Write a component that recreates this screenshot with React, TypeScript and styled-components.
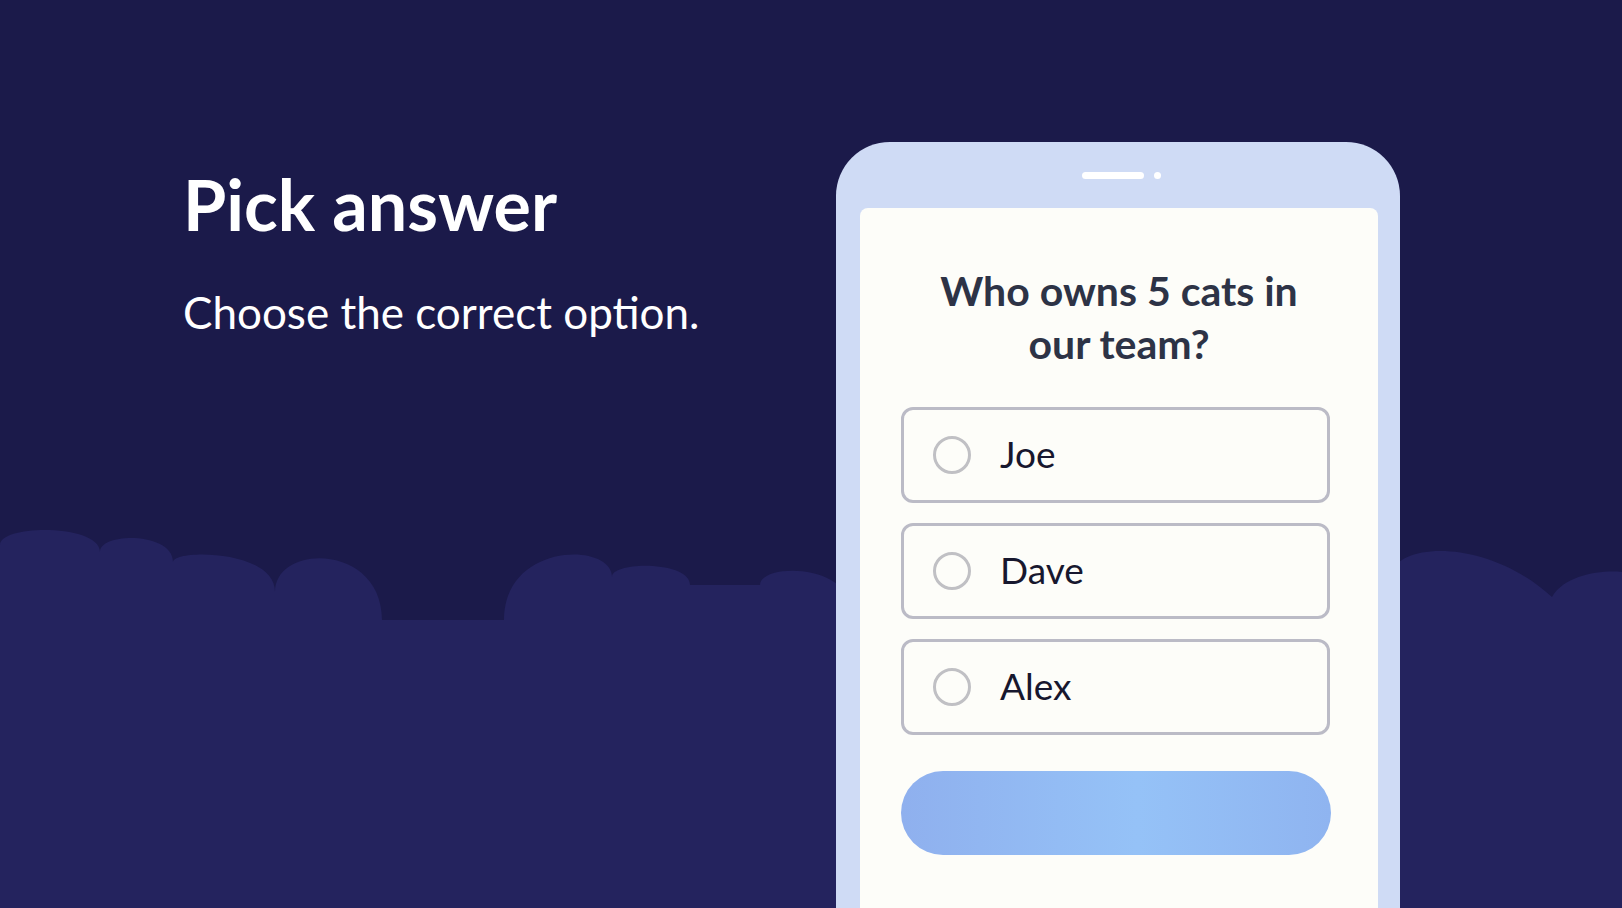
import React from 'react';
import styled, { createGlobalStyle } from 'styled-components';

const GlobalStyle = createGlobalStyle`
  html, body {
    margin: 0;
    padding: 0;
    background: #1b1a4a;
    overflow: hidden;
  }
  * {
    box-sizing: border-box;
  }
`;

const Page = styled.main`
  position: relative;
  width: 100%;
  height: 908px;
  overflow: hidden;
  display: flex;
  align-items: flex-start;
  padding-left: 183px;
  font-family: Lato, 'Open Sans', sans-serif;
  background: #1b1a4a;
`;

const Clouds = styled.svg`
  position: absolute;
  inset: 0;
  width: 100%;
  height: 100%;
  z-index: 0;
`;

const Intro = styled.section`
  position: relative;
  z-index: 1;
  flex: 0 0 653px;
  padding-top: 162px;
  color: #ffffff;
`;

const Title = styled.h1`
  margin: 0;
  font-size: 70px;
  line-height: 1.2;
  font-weight: 700;
`;

const Subtitle = styled.p`
  margin: 40px 0 0;
  font-size: 44px;
  line-height: 1.2;
  font-weight: 400;
`;

const Phone = styled.div`
  position: relative;
  z-index: 1;
  flex: 0 0 564px;
  height: 820px;
  margin-top: 142px;
  padding: 30px 22px 0 24px;
  background: #cfdbf5;
  border-radius: 54px 54px 0 0;
  display: flex;
  flex-direction: column;
`;

const Speaker = styled.div`
  display: flex;
  align-items: center;
  justify-content: center;
  gap: 10px;
  height: 7px;
  margin-bottom: 29px;
  padding-left: 4px;
`;

const SpeakerBar = styled.span`
  width: 62px;
  height: 7px;
  border-radius: 4px;
  background: #ffffff;
`;

const SpeakerDot = styled.span`
  width: 7px;
  height: 7px;
  border-radius: 50%;
  background: #ffffff;
`;

const Screen = styled.div`
  flex: 1;
  background: #fdfdf9;
  border-radius: 8px 8px 0 0;
  padding: 56px 0 0 41px;
`;

const Question = styled.h2`
  margin: 0 0 37px -41px;
  font-size: 41px;
  line-height: 53px;
  font-weight: 700;
  color: #2d3346;
  text-align: center;
  padding: 0 69px;
`;

const Options = styled.div`
  width: 429px;
  display: flex;
  flex-direction: column;
  gap: 20px;
`;

const Option = styled.label`
  height: 96px;
  border: 3px solid #bbbbc6;
  border-radius: 12px;
  display: flex;
  align-items: center;
  gap: 29px;
  padding-left: 29px;
  cursor: pointer;
`;

const Radio = styled.span`
  width: 38px;
  height: 38px;
  border-radius: 50%;
  border: 3px solid #c0c0c4;
  flex: 0 0 auto;
`;

const OptionText = styled.span`
  font-size: 37px;
  color: #17172e;
  margin-bottom: 4px;
`;

const SubmitButton = styled.button`
  margin-top: 36px;
  width: 430px;
  height: 84px;
  border: none;
  border-radius: 42px;
  background: linear-gradient(90deg, #8fb0ee 0%, #95c2f7 55%, #8fb4f0 100%);
  cursor: pointer;
`;

const answers = ['Joe', 'Dave', 'Alex'];

const leftHills =
  'M0,908 L0,545 ' +
  'C0,524 100,524 100,552 ' +
  'C100,532 173,532 173,562 ' +
  'C173,549 275,549 275,592 ' +
  'C275,543 382,543 382,620 ' +
  'L504,620 ' +
  'C504,542 612,542 612,577 ' +
  'C612,561 690,561 690,585 ' +
  'L760,585 ' +
  'C760,563 850,563 850,610 ' +
  'L850,908 Z';

const rightHills =
  'M1390,908 L1390,575 ' +
  'C1400,540 1490,540 1552,597 ' +
  'C1565,575 1600,570 1622,572 ' +
  'L1622,908 Z';

const App = () => {
  return (
    <>
      <GlobalStyle />
      <Page>
        <Clouds viewBox="0 0 1622 908" preserveAspectRatio="none" aria-hidden="true">
          <g fill="#24235e">
            <path d={leftHills} />
            <path d={rightHills} />
            <rect x="0" y="620" width="1622" height="288" />
          </g>
        </Clouds>

        <Intro>
          <Title>Pick answer</Title>
          <Subtitle>Choose the correct option.</Subtitle>
        </Intro>

        <Phone>
          <Speaker>
            <SpeakerBar />
            <SpeakerDot />
          </Speaker>
          <Screen>
            <Question>Who owns 5 cats in our team?</Question>
            <Options>
              {answers.map((name) => (
                <Option key={name}>
                  <Radio />
                  <OptionText>{name}</OptionText>
                </Option>
              ))}
            </Options>
            <SubmitButton aria-label="Submit" />
          </Screen>
        </Phone>
      </Page>
    </>
  );
};

export default App;
